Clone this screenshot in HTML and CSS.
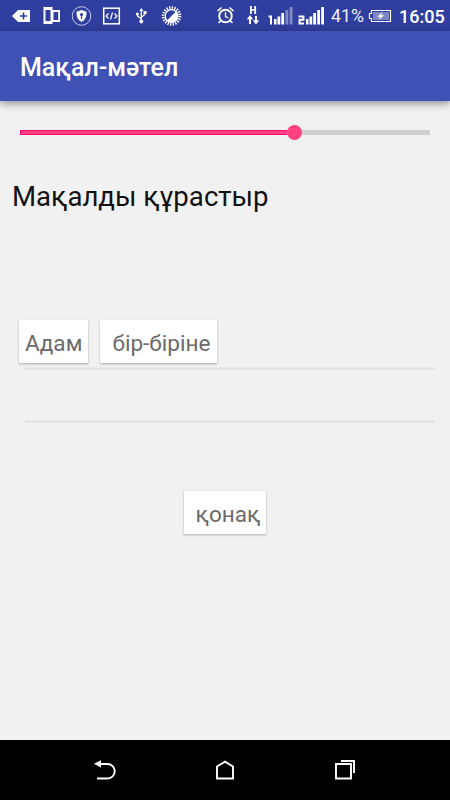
FILE: index.html
```html
<!DOCTYPE html>
<html lang="kk">
<head>
  <meta charset="UTF-8">
  <meta name="viewport" content="width=device-width, initial-scale=1">
  <title>Мақал-мәтел</title>
  <link rel="stylesheet" href="styles.css">
</head>
<body>
  <div class="status-bar">
    <div class="notifications">
      <svg width="22" height="31" viewBox="0 0 22 31">
        <path d="M2 16l6-6h12v12H8z" fill="#fff"/>
        <path d="M13.5 12.5v7M10 16h7" stroke="#303f9f" stroke-width="1.6"/>
      </svg>
      <svg width="22" height="31" viewBox="0 0 22 31">
        <path d="M3.500 7h9v17h-9zM5.500 10v11h5V10z" fill="#fff" fill-rule="evenodd"/>
        <path d="M11.500 10h8.500v12h-8.500zM13.500 12v8h4.700v-8z" fill="#fff" fill-rule="evenodd"/>
      </svg>
      <svg width="22" height="31" viewBox="0 0 22 31">
        <circle cx="11.500" cy="16" r="9.300" fill="none" stroke="#c5cae9"/>
        <path d="M11.500 10l5 1.800c0 5-1 8-5 10.200-4-2.200-5-5.200-5-10.200z" fill="#fff"/>
        <circle cx="11.500" cy="14.500" r="1.600" fill="#303f9f"/>
        <path d="M11.500 15v4" stroke="#303f9f" stroke-width="1.200"/>
      </svg>
      <svg width="22" height="31" viewBox="0 0 22 31" fill="none" stroke="#fff">
        <rect x="3.700" y="8.200" width="15.600" height="15.600" stroke-width="1.500"/>
        <path d="M8.500 13.500L6 16l2.500 2.500M14.500 13.500L17 16l-2.500 2.500M12.500 12.500l-2 7" stroke-width="1.200"/>
      </svg>
      <svg width="22" height="31" viewBox="0 0 22 31" fill="none" stroke="#fff" stroke-width="1.300">
        <path d="M11.300 10v11M11.300 19.500c0-2.500-4-1.500-4-5M11.300 18c0-2.500 3.700-1.500 3.700-5"/>
        <path d="M11.300 8l2 3h-4z" fill="#fff" stroke="none"/>
        <circle cx="11.300" cy="21.500" r="1.900" fill="#fff" stroke="none"/>
        <circle cx="7.300" cy="14" r="1.500" fill="#fff" stroke="none"/>
        <path d="M13.500 11h3v3h-3z" fill="#fff" stroke="none"/>
      </svg>
      <svg width="22" height="31" viewBox="0 0 22 31">
        <circle cx="11.500" cy="16" r="8.300" fill="none" stroke="#fff" stroke-width="3" stroke-dasharray="1.300 1.307"/>
        <circle cx="11.500" cy="16" r="6.300" fill="none" stroke="#fff" stroke-width="1.200"/>
        <path d="M15.900 11.600a6.200 6.200 0 0 1-8.800 8.800z" fill="#fff"/>
      </svg>
    </div>

    <div class="indicators">
      <svg class="alarm" width="20" height="31" viewBox="0 0 20 31" fill="none" stroke="#fff">
        <circle cx="9.500" cy="16" r="6.300" stroke-width="1.900"/>
        <path d="M9.500 12v4.500l3 1.500" stroke-width="1.300"/>
        <path d="M1.500 11l4-3.500M17.500 11l-4-3.500" stroke-width="1.600"/>
        <path d="M5 20.500L2.500 23M14 20.500l2.500 2.500" stroke-width="1.500"/>
      </svg>
      <svg class="data" width="14" height="31" viewBox="0 0 14 31" fill="#fff">
        <path d="M4 6h1.800v3.200h2.500V6h1.800v8H8.300v-3.200H5.800V14H4z"/>
        <path d="M4 15l3.200 4.200H5V24H3v-4.800H.8z"/>
        <path d="M10 24.500l-3.200-4.200H9V16h2v4.300h2.200z"/>
      </svg>
      <svg class="signal" width="26" height="31" viewBox="0 0 26 31" fill="#fff">
        <path d="M.5 15.500H4v9H2V17.500H.5z"/>
        <path d="M6 19h2.500v5.500H6zM9.500 16.500h2.700v8H9.500zM13.300 13h2.800v11.500h-2.800z"/>
        <path d="M17.500 10h2.800v14.500h-2.800zM21.700 7h2.800v17.500h-2.800z" opacity=".4"/>
      </svg>
      <svg class="signal" width="26" height="31" viewBox="0 0 26 31">
        <path d="M.5 16.500h5v3.300h-4v3.700H6" fill="none" stroke="#fff" stroke-width="1.900"/>
        <path d="M8 19h2.500v5.500H8zM11.500 16.500h2.700v8h-2.700zM15.200 13H18v11.500h-2.800zM19.200 10H22v14.500h-2.800zM23.200 7H26v17.500h-2.800z" fill="#fff"/>
      </svg>
      <span class="percent">41%</span>
      <svg class="battery" width="24" height="31" viewBox="0 0 24 31">
        <path d="M3.500 10.500h19v11h-19v-3h-2v-5h2z" fill="none" stroke="#fff" stroke-width="1.200"/>
        <path d="M5 12h16v8H5z" fill="#7f88c6"/>
        <path d="M14.500 12l-5.300 4.700h3L10.500 20l5.800-4.700h-3.200z" fill="#fff"/>
      </svg>
      <span class="clock">16:05</span>
    </div>
  </div>

  <header class="toolbar">
    <h1>Мақал-мәтел</h1>
  </header>

  <main class="content">
    <div class="progress">
      <div class="progress-fill"></div>
      <div class="progress-thumb"></div>
      <div class="progress-rest"></div>
    </div>

    <h2>Мақалды құрастыр</h2>

    <div class="answer">
      <span class="word first">Адам</span>
      <span class="word">бір-біріне</span>
    </div>
    <div class="line"></div>
    <div class="line"></div>

    <div class="choices">
      <span class="word">қонақ</span>
    </div>
  </main>

  <nav class="nav-bar">
    <svg width="24" height="24" viewBox="0 0 24 24" fill="none" stroke="#fff" stroke-width="1.900">
      <path d="M6 6h8.500a7.250 7.250 0 0 1 0 14.500H4"/>
      <path d="M1 5.800L8 2.200v7.200z" fill="#fff" stroke="none"/>
    </svg>
    <svg width="24" height="24" viewBox="0 0 24 24" fill="none" stroke="#fff" stroke-width="1.900">
      <path d="M4 20.500V8.500L12 3.700l8 4.800v12z"/>
    </svg>
    <svg width="24" height="24" viewBox="0 0 24 24" fill="none" stroke="#fff" stroke-width="1.900">
      <path d="M3 6h15v14.500H3zM8 3h13v12"/>
    </svg>
  </nav>
</body>
</html>
```

FILE: styles.css
```css
* { box-sizing: border-box; }

body {
  margin: 0;
  height: 800px;
  display: flex;
  flex-direction: column;
  background: #f1f1f1;
  font-family: Roboto, "Noto Sans", sans-serif;
  overflow: hidden;
}

svg { display: block; flex: none; }

.status-bar {
  display: flex;
  justify-content: space-between;
  height: 31px;
  padding: 0 6px 0 10px;
  background: #303f9f;
  color: #fff;
}

.notifications { display: flex; gap: 8px; }
.indicators { display: flex; align-items: center; }

.alarm { margin-right: 10px; }
.data { margin-right: 8px; }
.signal { margin-right: 4px; }

.percent {
  width: 34px;
  margin: 2px 0 0 3px;
  color: #eceefa;
  font-size: 17.7px;
  line-height: 29px;
}

.battery { margin-left: 3px; }

.clock {
  width: 45px;
  margin: 2px 0 0 7px;
  font-size: 18px;
  font-weight: 500;
  line-height: 29px;
}

.toolbar {
  display: flex;
  align-items: center;
  height: 70px;
  padding: 4px 20px 0;
  background: #3f51b5;
  box-shadow: 0 2px 8px rgba(0, 0, 0, 0.45);
}

h1 {
  margin: 0;
  color: #fff;
  font-size: 25px;
  font-weight: 500;
  line-height: 32px;
}

.content { flex: 1; }

.progress {
  display: flex;
  align-items: center;
  height: 15px;
  margin: 24px 20px 0;
}

.progress-fill { width: 267px; height: 5px; background: #ff4081; border: solid #ff0a72; border-width: 1px 0 1px 1px; }
.progress-thumb { width: 15px; height: 15px; border-radius: 50%; background: #ff4081; }
.progress-rest { flex: 1; height: 5px; background: #cfcfcf; }

h2 {
  margin: 39px 12px 0;
  font-size: 27.6px;
  font-weight: 400;
  line-height: 36px;
  color: #111;
}

.answer {
  display: flex;
  gap: 12px;
  margin: 105px 19px 4px;
}

.word {
  height: 43px;
  padding: 0 6px 0 12px;
  background: #fff;
  box-shadow: 0 1px 2px rgba(0, 0, 0, 0.3);
  color: #6b6b6b;
  font-size: 22.6px;
  line-height: 48px;
}

.word.first { padding-left: 6px; }

.line {
  height: 3px;
  margin: 0 15px 50px 25px;
  background: #dedede;
  border: solid #e8e8e8;
  border-width: 1px 0;
}

.choices {
  display: flex;
  justify-content: center;
  padding-top: 18px;
}

.nav-bar {
  display: flex;
  align-items: center;
  justify-content: center;
  gap: 96px;
  height: 60px;
  background: #000;
}
```
